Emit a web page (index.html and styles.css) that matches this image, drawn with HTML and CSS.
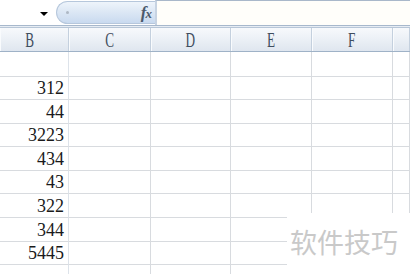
FILE: index.html
```html
<!DOCTYPE html>
<html>
<head>
<meta charset="utf-8">
<link rel="stylesheet" href="styles.css">
</head>
<body>
<div class="sheet">
  <div class="fbar">
    <div class="namebox"><span class="arrow"></span></div>
    <div class="pill"><span class="grip"></span><span class="fx">f<i>x</i></span></div>
    <div class="input"></div>
  </div>
  <div class="gap"></div>
  <div class="head">
    <div class="hc"><span>B</span></div>
    <div class="hc"><span>C</span></div>
    <div class="hc"><span>D</span></div>
    <div class="hc"><span>E</span></div>
    <div class="hc"><span>F</span></div>
    <div class="hc"></div>
  </div>
  <div class="grid">
    <div class="c"></div><div class="c"></div><div class="c"></div><div class="c"></div><div class="c"></div><div class="c"></div>
    <div class="c n">312</div><div class="c"></div><div class="c"></div><div class="c"></div><div class="c"></div><div class="c"></div>
    <div class="c n">44</div><div class="c"></div><div class="c"></div><div class="c"></div><div class="c"></div><div class="c"></div>
    <div class="c n">3223</div><div class="c"></div><div class="c"></div><div class="c"></div><div class="c"></div><div class="c"></div>
    <div class="c n">434</div><div class="c"></div><div class="c"></div><div class="c"></div><div class="c"></div><div class="c"></div>
    <div class="c n">43</div><div class="c"></div><div class="c"></div><div class="c"></div><div class="c"></div><div class="c"></div>
    <div class="c n">322</div><div class="c"></div><div class="c"></div><div class="c"></div><div class="c"></div><div class="c"></div>
    <div class="c n">344</div><div class="c"></div><div class="c"></div><div class="c"></div><div class="c"></div><div class="c"></div>
    <div class="c n">5445</div><div class="c"></div><div class="c"></div><div class="c"></div><div class="c"></div><div class="c"></div>
    <div class="c"></div><div class="c"></div><div class="c"></div><div class="c"></div><div class="c"></div><div class="c"></div>
  </div>
  <div class="watermark">软件技巧</div>
</div>
</body>
</html>
```

FILE: styles.css
```css
html, body {
  margin: 0;
  padding: 0;
  background: #ffffff;
}
.sheet {
  position: relative;
  width: 410px;
  height: 274px;
  overflow: hidden;
  background: #ffffff;
}
.fbar {
  display: flex;
  height: 25px;
  border-bottom: 1px solid #a7b8cc;
  background: #ffffff;
}
.namebox {
  width: 56px;
  display: flex;
  justify-content: flex-end;
  align-items: center;
  padding-right: 8px;
  box-sizing: border-box;
}
.arrow {
  width: 0;
  height: 0;
  border-left: 4px solid transparent;
  border-right: 4px solid transparent;
  border-top: 4px solid #000000;
  margin-top: 2px;
}
.pill {
  width: 99px;
  height: 23px;
  margin-top: 1px;
  box-sizing: border-box;
  border: 1px solid #b6c7dc;
  border-right: none;
  border-radius: 12px 0 0 12px;
  background: linear-gradient(#eef4fb 0%, #dde8f5 45%, #c9daef 100%);
  display: flex;
  align-items: center;
  position: relative;
}
.grip {
  width: 3px;
  height: 3px;
  border-radius: 50%;
  background: #aeb8c4;
  margin-left: 9px;
}
.fx {
  margin-left: auto;
  margin-right: 4px;
  font-family: "Liberation Serif", serif;
  font-style: italic;
  font-weight: bold;
  font-size: 17px;
  color: #4c5a6c;
  letter-spacing: -1px;
}
.fx i {
  font-size: 13px;
}
.input {
  flex: 1;
  border-left: 2px solid #c7d3e2;
  border-top: 1px solid #a9b8ca;
  background: #fffefa;
}
.gap {
  height: 1px;
  background: #e6ecf3;
}
.head {
  display: grid;
  grid-template-columns: 69px 82px 80px 81px 81px 1fr;
  height: 25px;
  box-sizing: border-box;
  border-top: 1px solid #b7c6d7;
  border-bottom: 1px solid #9fb2c7;
  background: linear-gradient(#f7f9fc 0%, #eaeff5 55%, #dfe6ef 100%);
}
.hc {
  border-right: 1px solid #c4d0de;
  box-shadow: inset 1px 0 0 #f9fbfd;
  display: flex;
  align-items: center;
  justify-content: center;
  font-family: "Liberation Serif", serif;
  font-size: 20px;
  color: #3f4d5e;
}
.hc:first-child {
  justify-content: flex-end;
  padding-right: 32px;
}
.hc span {
  display: inline-block;
  transform: scaleX(0.66);
  line-height: 20px;
}
.grid {
  display: grid;
  grid-template-columns: 69px 82px 80px 81px 81px 1fr;
  grid-template-rows: 25px 23px 24px 23px 24px 23px 24px 24px 23px 20px;
}
.c {
  border-right: 1px solid #d8dbdf;
  border-bottom: 1px solid #d8dbdf;
  box-sizing: border-box;
}
.c:nth-child(6n+1) {
  border-right-color: #dde3ea;
}
.n {
  display: flex;
  justify-content: flex-end;
  align-items: flex-end;
  padding-right: 4px;
  font-family: "Liberation Serif", serif;
  font-size: 18px;
  line-height: 21px;
  color: #1a1a1a;
}
.watermark {
  position: absolute;
  left: 287px;
  top: 213px;
  width: 123px;
  height: 61px;
  background: #ffffff;
  box-sizing: border-box;
  padding-left: 3px;
  padding-top: 13px;
  font-family: "Noto Sans CJK SC", sans-serif;
  font-size: 27px;
  line-height: 32px;
  color: #c9c9c9;
  letter-spacing: 0;
}
```
